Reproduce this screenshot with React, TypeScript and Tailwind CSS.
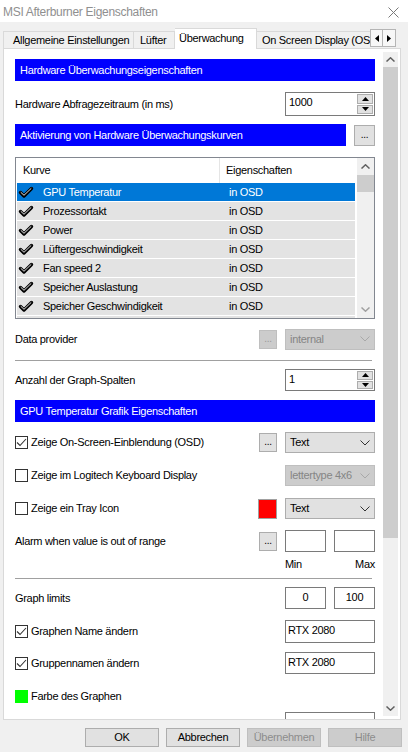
import React from "react";

function Chevron({ up = false, className = "" }: { up?: boolean; className?: string }) {
  return (
    <svg width="9" height="5" viewBox="0 0 9 5" className={className}>
      <path
        d={up ? "M0.5 4.5L4.5 0.8L8.5 4.5" : "M0.5 0.5L4.5 4.2L8.5 0.5"}
        fill="none"
        stroke="currentColor"
        strokeWidth="1.5"
      />
    </svg>
  );
}

function DropArrow({ className = "" }: { className?: string }) {
  return (
    <svg width="10" height="6" viewBox="0 0 10 6" className={className}>
      <path d="M0.5 0.5L5 5L9.5 0.5" fill="none" stroke="currentColor" strokeWidth="1" />
    </svg>
  );
}

function Tick() {
  return (
    <svg width="16" height="13" viewBox="0 0 16 13">
      <path d="M2.5 6.5L6 10L13.5 2.5" fill="none" stroke="#000" strokeWidth="3.4" strokeLinecap="round" strokeLinejoin="round" />
      <path d="M3 6.5L6 9.3L13 2.6" fill="none" stroke="#fff" strokeWidth="0.9" strokeLinecap="round" />
    </svg>
  );
}

function Checkbox({ checked = false }: { checked?: boolean }) {
  return (
    <div className="w-[13px] h-[13px] shrink-0 border border-[#333333] bg-white flex items-center justify-center">
      {checked && (
        <svg width="11" height="9" viewBox="0 0 11 9">
          <path d="M1 4.5L4 7.5L10 1" fill="none" stroke="#333333" strokeWidth="1.1" />
        </svg>
      )}
    </div>
  );
}

function Dots({ disabled = false }: { disabled?: boolean }) {
  return (
    <div
      className={`w-[18px] h-[19px] shrink-0 border flex items-end justify-center pb-[4px] text-[10px] leading-none ${
        disabled ? "bg-[#cccccc] border-[#bfbfbf] text-[#9a9a9a]" : "bg-[#e1e1e1] border-[#adadad] text-black"
      }`}
    >
      ...
    </div>
  );
}

function Select({ value, disabled = false }: { value: string; disabled?: boolean }) {
  return (
    <div
      className={`w-[90px] h-[21px] shrink-0 border flex items-center justify-between pl-[4px] pr-[4px] ${
        disabled ? "bg-[#cccccc] border-[#bfbfbf] text-[#858585]" : "bg-[#e1e1e1] border-[#adadad] text-black"
      }`}
    >
      <span>{value}</span>
      <DropArrow className={disabled ? "text-[#a8a8a8]" : "text-[#333333]"} />
    </div>
  );
}

function SpinBtn({ up = false }: { up?: boolean }) {
  return (
    <div className="flex-1 bg-[#e1e1e1] border border-[#adadad] flex items-center justify-center">
      <svg width="7" height="4" viewBox="0 0 7 4">
        <path d={up ? "M0 4L3.5 0L7 4Z" : "M0 0L3.5 4L7 0Z"} fill="#000" />
      </svg>
    </div>
  );
}

function Spin({ value, tall = false }: { value: string; tall?: boolean }) {
  return (
    <div className={`w-[90px] ${tall ? "h-[24px]" : "h-[22px]"} shrink-0 border border-[#7a7a7a] bg-white flex`}>
      <div className="flex-1 pl-[3px] pt-[4px]">{value}</div>
      <div className="w-[17px] flex flex-col gap-[1px] py-[1px] pr-[1px]">
        <SpinBtn up />
        <SpinBtn />
      </div>
    </div>
  );
}

function Field({ value = "", w = "w-[41px]", center = false, h = "h-[22px]" }: { value?: string; w?: string; center?: boolean; h?: string }) {
  return (
    <div className={`${w} ${h} shrink-0 border border-[#7a7a7a] bg-white pt-[4px] ${center ? "text-center" : "pl-[2px]"}`}>
      {value}
    </div>
  );
}

function BlueBar({ text, w = "w-full" }: { text: string; w?: string }) {
  return (
    <div className={`${w} h-[22px] bg-[#0000ff] text-white flex items-center pl-[5px]`}>{text}</div>
  );
}

const curves = [
  "GPU Temperatur",
  "Prozessortakt",
  "Power",
  "Lüftergeschwindigkeit",
  "Fan speed 2",
  "Speicher Auslastung",
  "Speicher Geschwindigkeit",
  "Kerntakt",
];

function CurveList() {
  return (
    <div className="mt-[10px] h-[162px] border border-[#828790] bg-white flex overflow-hidden">
      <div className="w-[340px] flex flex-col">
        <div className="h-[25px] flex items-center shrink-0">
          <div className="w-[203px] pl-[7px]">Kurve</div>
          <div className="w-px h-full bg-[#e5e5e5]" />
          <div className="pl-[6px]">Eigenschaften</div>
        </div>
        {curves.map((c, i) => (
          <div
            key={c}
            className={`ml-px w-[338px] h-[19px] shrink-0 flex items-center border-b border-white ${
              i === 0 ? "bg-[#0078d7] text-white" : "bg-[#e3e3e3] text-black"
            }`}
          >
            <div className="w-[26px] pl-[1px] flex items-center">
              <Tick />
            </div>
            <div className="w-[176px]">{c}</div>
            <div className="pl-[10px]">in OSD</div>
          </div>
        ))}
      </div>
      <div className="ml-px w-[17px] bg-[#f0f0f0] flex flex-col items-center">
        <div className="h-[17px] flex items-center justify-center text-[#606060]">
          <Chevron up />
        </div>
        <div className="w-full h-[17px] bg-[#cdcdcd]" />
        <div className="flex-1" />
        <div className="h-[17px] flex items-center justify-center text-[#a0a0a0]">
          <Chevron />
        </div>
      </div>
    </div>
  );
}

function Button({ label, disabled = false }: { label: string; disabled?: boolean }) {
  return (
    <div
      className={`w-[74px] h-[19px] border flex items-center justify-center ${
        disabled ? "bg-[#cccccc] border-[#bfbfbf] text-[#8c8c8c]" : "bg-[#e1e1e1] border-[#adadad] text-black"
      }`}
    >
      {label}
    </div>
  );
}

export default function App() {
  return (
    <div className="w-[408px] h-[752px] overflow-hidden bg-[#f0f0f0] font-['Liberation_Sans',Arial,sans-serif] text-[11px] leading-none tracking-[-0.3px] text-black flex flex-col">
      {/* title bar */}
      <div className="h-[22px] bg-white flex items-center justify-between pl-[3px] pr-[9px] shrink-0">
        <span className="text-[12px] text-[#8f8f8f] pt-[1px]">MSI Afterburner Eigenschaften</span>
        <svg width="11" height="11" viewBox="0 0 11 11" className="mt-[2px]">
          <path d="M0.5 0.5L10.5 10.5M10.5 0.5L0.5 10.5" stroke="#7a7a7a" strokeWidth="1" />
        </svg>
      </div>

      {/* tabs */}
      <div className="relative z-10 h-[27px] flex items-end pl-[3px] shrink-0">
        <div className="w-[367px] h-full flex items-end overflow-hidden">
          <div className="w-[131px] h-[17px] mb-px shrink-0 border border-b-0 border-[#d9d9d9] flex items-center pl-[9px]">
            Allgemeine Einstellungen
          </div>
          <div className="w-[41px] h-[17px] mb-px shrink-0 border border-b-0 border-l-0 border-[#d9d9d9] flex items-center pl-[6px]">
            Lüfter
          </div>
          <div className="w-[82px] h-[21px] shrink-0 border border-b-0 border-l-0 border-[#d9d9d9] bg-white flex items-start pt-[4px] pl-[4px]">
            Überwachung
          </div>
          <div className="w-[130px] h-[17px] mb-px shrink-0 border border-b-0 border-l-0 border-[#d9d9d9] flex items-center pl-[5px] whitespace-nowrap">
            On Screen Display (OSD)
          </div>
        </div>
        <div className="self-start mt-[7px] flex">
          <div className="w-[13px] h-[18px] border border-[#b5b5b5] bg-[#f7f7f7] flex items-center justify-center">
            <svg width="4" height="7" viewBox="0 0 4 7">
              <path d="M4 0L0 3.5L4 7Z" fill="#000" />
            </svg>
          </div>
          <div className="w-[13px] h-[18px] border border-l-0 border-[#b5b5b5] bg-[#f7f7f7] flex items-center justify-center">
            <svg width="4" height="7" viewBox="0 0 4 7">
              <path d="M0 0L4 3.5L0 7Z" fill="#000" />
            </svg>
          </div>
        </div>
      </div>

      {/* panel */}
      <div className="-mt-px ml-[3px] w-[398px] h-[672px] shrink-0 border border-[#d9d9d9] bg-white flex overflow-hidden">
        <div className="ml-[11px] w-[360px] pt-[10px] shrink-0">
          <BlueBar text="Hardware Überwachungseigenschaften" />

          <div className="mt-[11px] flex items-center justify-between">
            <span>Hardware Abfragezeitraum (in ms)</span>
            <Spin value="1000" tall />
          </div>

          <div className="mt-[8px] h-[23px] flex items-start justify-between">
            <BlueBar text="Aktivierung von Hardware Überwachungskurven" w="w-[331px]" />
            <div className="mt-px w-[21px] h-[21px] bg-[#e1e1e1] border border-[#adadad] flex items-end justify-center pb-[5px] text-[10px]">
              ...
            </div>
          </div>

          <CurveList />

          <div className="mt-[10px] h-[20px] flex items-center">
            <span className="flex-1">Data provider</span>
            <Dots disabled />
            <div className="ml-[8px]">
              <Select value="internal" disabled />
            </div>
          </div>

          <div className="mt-[11px] w-[357px] h-px bg-[#a0a0a0]" />

          <div className="mt-[8px] flex items-center justify-between">
            <span>Anzahl der Graph-Spalten</span>
            <Spin value="1" />
          </div>

          <div className="mt-[9px]">
            <BlueBar text="GPU Temperatur Grafik Eigenschaften" />
          </div>

          <div className="mt-[10px] h-[21px] flex items-center">
            <Checkbox checked />
            <span className="flex-1 pl-[3px]">Zeige On-Screen-Einblendung (OSD)</span>
            <Dots />
            <div className="ml-[8px]">
              <Select value="Text" />
            </div>
          </div>

          <div className="mt-[12px] h-[21px] flex items-center">
            <Checkbox />
            <span className="flex-1 pl-[3px]">Zeige im Logitech Keyboard Display</span>
            <Select value="lettertype 4x6" disabled />
          </div>

          <div className="mt-[12px] h-[21px] flex items-center">
            <Checkbox />
            <span className="flex-1 pl-[3px]">Zeige ein Tray Icon</span>
            <div className="w-[19px] h-[20px] bg-[#ff0000] border border-[#a0a0a0]" />
            <div className="ml-[8px]">
              <Select value="Text" />
            </div>
          </div>

          <div className="mt-[11px] h-[22px] flex items-center">
            <span className="flex-1">Alarm when value is out of range</span>
            <Dots />
            <div className="ml-[8px] flex gap-[8px]">
              <Field />
              <Field />
            </div>
          </div>

          <div className="mt-[6px] h-[13px] flex justify-end">
            <div className="w-[90px] flex justify-between items-center">
              <span>Min</span>
              <span>Max</span>
            </div>
          </div>

          <div className="mt-[7px] w-[357px] h-px bg-[#a0a0a0]" />

          <div className="mt-[8px] h-[22px] flex items-center">
            <span className="flex-1">Graph limits</span>
            <div className="flex gap-[8px]">
              <Field value="0" center />
              <Field value="100" center />
            </div>
          </div>

          <div className="mt-[11px] h-[23px] flex items-center">
            <Checkbox checked />
            <span className="flex-1 pl-[3px]">Graphen Name ändern</span>
            <Field value="RTX 2080" w="w-[90px]" h="h-[23px]" />
          </div>

          <div className="mt-[9px] h-[22px] flex items-center">
            <Checkbox checked />
            <span className="flex-1 pl-[3px]">Gruppennamen ändern</span>
            <Field value="RTX 2080" w="w-[90px]" />
          </div>

          <div className="mt-[12px] h-[20px] flex items-center">
            <div className="w-[13px] h-[13px] bg-[#00ff00]" />
            <span className="flex-1 pl-[3px]">Farbe des Graphen</span>
          </div>

          <div className="mt-[6px] flex justify-end">
            <Field w="w-[90px]" />
          </div>
        </div>

        {/* main scrollbar */}
        <div className="ml-[8px] w-[15px] my-[3px] bg-[#f0f0f0] flex flex-col shrink-0">
          <div className="h-[15px] shrink-0 flex items-center justify-center text-[#606060]">
            <Chevron up />
          </div>
          <div className="h-[471px] shrink-0 bg-[#cdcdcd]" />
          <div className="flex-1" />
          <div className="h-[15px] shrink-0 flex items-center justify-center text-[#606060]">
            <Chevron />
          </div>
        </div>
      </div>

      {/* footer buttons */}
      <div className="mt-[8px] pr-[6px] flex justify-end gap-[7px]">
        <Button label="OK" />
        <Button label="Abbrechen" />
        <Button label="Übernehmen" disabled />
        <Button label="Hilfe" disabled />
      </div>
    </div>
  );
}
